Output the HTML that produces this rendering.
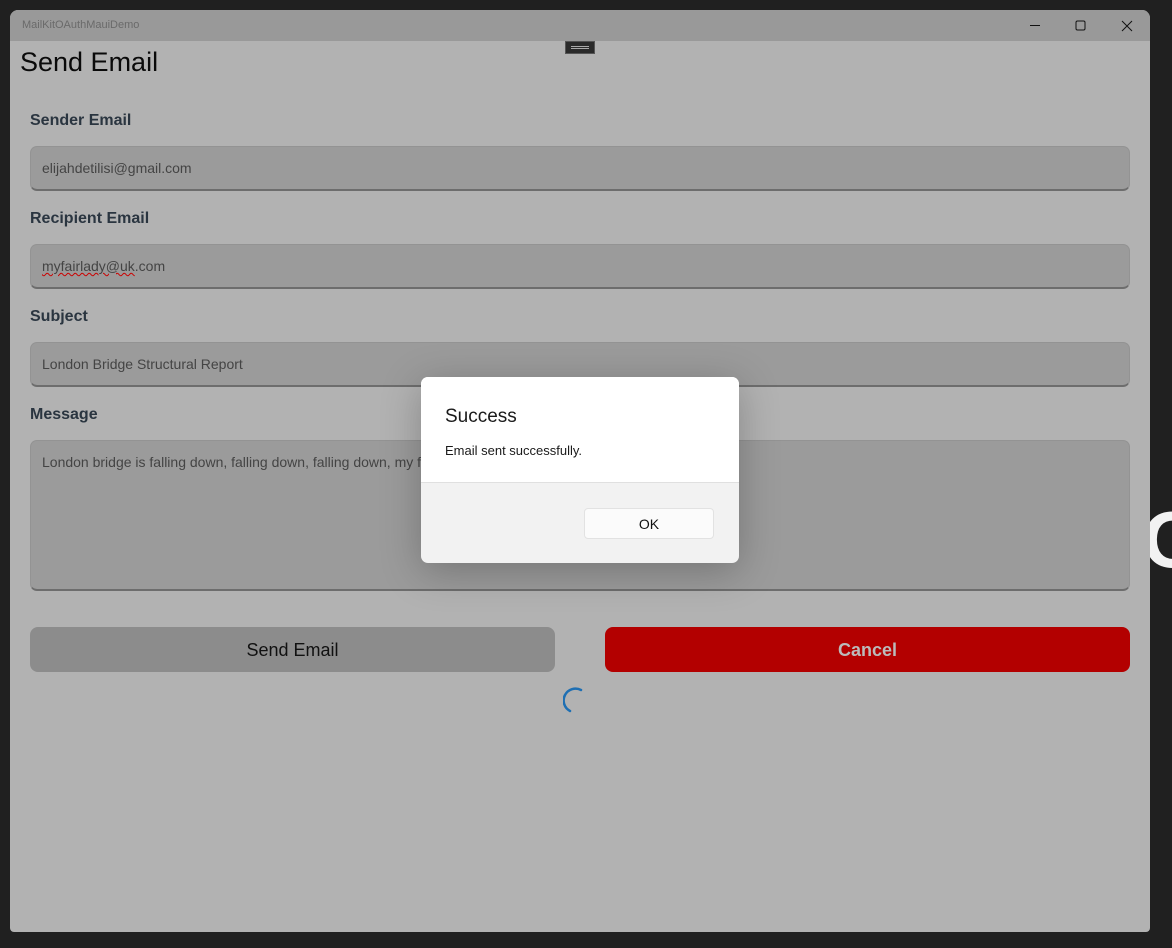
<!DOCTYPE html>
<html><head><meta charset="utf-8"><style>
*{margin:0;padding:0;box-sizing:border-box}
body{width:1172px;height:948px;background:#202020;position:relative;overflow:hidden;font-family:"Liberation Sans",sans-serif}
.win{position:absolute;left:10px;top:10px;width:1140px;height:922px;background:#b2b2b2;border-radius:8px 8px 4px 4px;overflow:hidden}
.tb{position:absolute;left:0;top:0;width:100%;height:31px;background:#999}
.tb .t{position:absolute;left:12px;top:9px;font-size:11px;color:#6a6a6a}
.h1{position:absolute;left:10px;top:37px;font-size:27px;color:#0a0a0a}
.lbl{position:absolute;left:20px;font-size:16px;font-weight:bold;color:#2a3540}
.inp{position:absolute;left:20px;width:1100px;height:45px;background:#9b9b9b;border-radius:7px;border:1px solid #939393;border-bottom:2px solid #6d6d6d;font-size:14px;color:#444;padding:13px 0 0 11px}
.btn{position:absolute;top:617px;height:45px;width:525px;border-radius:8px;font-size:18px;text-align:center;line-height:46px}
.dlg{position:absolute;left:421px;top:377px;width:318px;height:186px;background:#f2f2f2;border-radius:7px;overflow:hidden;box-shadow:0 8px 40px rgba(0,0,0,.25)}
</style></head><body>
<div style="position:absolute;left:1142px;top:500px;font-size:80px;font-weight:bold;color:#f2f2f2;line-height:1">O</div>
<div class="win">
 <div class="tb"><span class="t">MailKitOAuthMauiDemo</span>
  <svg style="position:absolute;left:1018px;top:9px" width="120" height="14" viewBox="0 0 120 14" fill="none" stroke="#111" stroke-width="1">
   <path d="M2 6.5h10"/><rect x="48" y="2" width="9" height="9" rx="1.5"/><path d="M94 2l10 10M104 2l-10 10"/></svg>
 </div>
 <div style="position:absolute;left:555px;top:31px;width:30px;height:13px;background:#2a2a2a;border:1px solid #555"><div style="margin:4px 5px;height:3px;border-top:1px solid #aaa;border-bottom:1px solid #aaa"></div></div>
 <div class="h1">Send Email</div>
 <div class="lbl" style="top:102px">Sender Email</div>
 <div class="inp" style="top:136px">elijahdetilisi@gmail.com</div>
 <div class="lbl" style="top:200px">Recipient Email</div>
 <div class="inp" style="top:234px"><span style="text-decoration:underline wavy #c00;text-decoration-thickness:1px">myfairlady@uk</span>.com</div>
 <div class="lbl" style="top:298px">Subject</div>
 <div class="inp" style="top:332px">London Bridge Structural Report</div>
 <div class="lbl" style="top:396px">Message</div>
 <div class="inp" style="top:430px;height:151px">London bridge is falling down, falling down, falling down, my fair lady</div>
 <div class="btn" style="left:20px;background:#8c8c8c;color:#111">Send Email</div>
 <div class="btn" style="left:595px;background:#b30000;color:#bbb;font-weight:bold">Cancel</div>
 <svg style="position:absolute;left:553px;top:677px" width="24" height="28" viewBox="0 0 24 28"><path d="M18 3A11 11 0 0 0 7 24" fill="none" stroke="#1e6fb3" stroke-width="2.5" stroke-linecap="round"/></svg>
</div>
<div class="dlg">
 <div style="background:#fff;height:106px;border-bottom:1px solid #e0e0e0;padding:29px 24px 0">
  <div style="font-size:19px;color:#1a1a1a">Success</div>
  <div style="font-size:13px;color:#1a1a1a;margin-top:15px">Email sent successfully.</div>
 </div>
 <div style="position:absolute;left:163px;top:131px;width:130px;height:31px;background:#fbfbfb;border:1px solid #e2e2e2;border-radius:4px;text-align:center;line-height:30px;font-size:14px;color:#111">OK</div>
</div>
</body></html>
